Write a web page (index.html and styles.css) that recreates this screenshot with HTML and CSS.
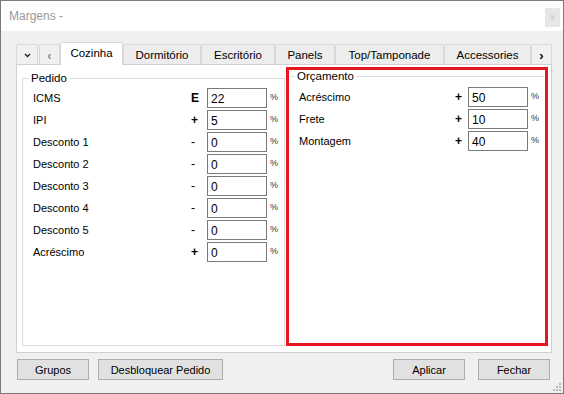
FILE: index.html
```html
<!DOCTYPE html>
<html lang="pt">
<head>
    <meta charset="UTF-8">
    <meta name="viewport" content="width=device-width, initial-scale=1.0">
    <link rel="stylesheet" href="styles.css">
</head>
<body>
    <div class="window">
        <!-- Title bar -->
        <div class="titlebar">
            <span class="title">Margens -</span>
            <span class="close">x</span>
        </div>

        <div class="content">
            <!-- Tabs -->
            <div class="tabs">
                <div class="tab nav nav-down">
                    <svg width="7" height="5" viewBox="0 0 7 5"><path d="M1 1 L3.5 3.5 L6 1" fill="none" stroke="#222" stroke-width="1.4"/></svg>
                </div>
                <div class="tab nav nav-left">&lsaquo;</div>
                <div class="tab active w-cozinha">Cozinha</div>
                <div class="tab w-dorm">Dormitório</div>
                <div class="tab w-escr">Escritório</div>
                <div class="tab w-panels">Panels</div>
                <div class="tab w-top">Top/Tamponade</div>
                <div class="tab w-acc">Accessories</div>
                <div class="tab nav nav-right">&rsaquo;</div>
            </div>

            <!-- Tab page -->
            <div class="panel">
                <fieldset class="group pedido">
                    <legend>Pedido</legend>
                    <div class="row"><span class="label">ICMS</span><span class="sign">E</span><input class="value" value="22"><span class="pct">%</span></div>
                    <div class="row"><span class="label">IPI</span><span class="sign">+</span><input class="value" value="5"><span class="pct">%</span></div>
                    <div class="row"><span class="label">Desconto 1</span><span class="sign minus">-</span><input class="value" value="0"><span class="pct">%</span></div>
                    <div class="row"><span class="label">Desconto 2</span><span class="sign minus">-</span><input class="value" value="0"><span class="pct">%</span></div>
                    <div class="row"><span class="label">Desconto 3</span><span class="sign minus">-</span><input class="value" value="0"><span class="pct">%</span></div>
                    <div class="row"><span class="label">Desconto 4</span><span class="sign minus">-</span><input class="value" value="0"><span class="pct">%</span></div>
                    <div class="row"><span class="label">Desconto 5</span><span class="sign minus">-</span><input class="value" value="0"><span class="pct">%</span></div>
                    <div class="row"><span class="label">Acréscimo</span><span class="sign">+</span><input class="value" value="0"><span class="pct">%</span></div>
                </fieldset>

                <div class="highlight">
                    <fieldset class="group orcamento">
                        <legend>Orçamento</legend>
                        <div class="row"><span class="label">Acréscimo</span><span class="sign">+</span><input class="value" value="50"><span class="pct">%</span></div>
                        <div class="row"><span class="label">Frete</span><span class="sign">+</span><input class="value" value="10"><span class="pct">%</span></div>
                        <div class="row"><span class="label">Montagem</span><span class="sign">+</span><input class="value" value="40"><span class="pct">%</span></div>
                    </fieldset>
                </div>
            </div>

            <!-- Bottom buttons -->
            <div class="buttons">
                <button class="btn btn-grupos">Grupos</button>
                <button class="btn btn-wide">Desbloquear Pedido</button>
                <button class="btn btn-aplicar">Aplicar</button>
                <button class="btn btn-fechar">Fechar</button>
            </div>
        </div>

        <!-- Resize grip -->
        <svg class="grip" width="10" height="10" viewBox="0 0 10 10">
            <rect x="7" y="1" width="2" height="2"/>
            <rect x="4" y="4" width="2" height="2"/>
            <rect x="7" y="4" width="2" height="2"/>
            <rect x="1" y="7" width="2" height="2"/>
            <rect x="4" y="7" width="2" height="2"/>
            <rect x="7" y="7" width="2" height="2"/>
        </svg>
    </div>
</body>
</html>
```

FILE: styles.css
```css
body {
    margin: 0;
    font-family: 'Liberation Sans', Arial, sans-serif;
    font-size: 11px;
    color: #000;
    background: #fff;
}
.window {
    position: relative;
    width: 564px;
    height: 394px;
    border: 1px solid #7a7a7a;
    box-sizing: border-box;
    display: flex;
    flex-direction: column;
}
.titlebar {
    height: 30px;
    flex: none;
    background: #fff;
    display: flex;
    justify-content: space-between;
    padding: 0 3px 0 8px;
}
.title {
    font-size: 12px;
    color: #999;
    line-height: 30px;
}
.close {
    margin-top: 7px;
    width: 15px;
    height: 19px;
    background: #e6e6e6;
    color: #c4c4c4;
    font-size: 9px;
    line-height: 18px;
    text-align: center;
}
.content {
    flex: 1;
    background: #f0f0f0;
    padding: 11px 11px 0 15px;
    display: flex;
    flex-direction: column;
}

/* tabs */
.tabs {
    display: flex;
    align-items: flex-end;
    height: 22px;
}
.tab {
    height: 20px;
    box-sizing: border-box;
    border: 1px solid #d9d9d9;
    border-bottom: none;
    border-radius: 2px 2px 0 0;
    background: #ededed;
    display: flex;
    align-items: center;
    justify-content: center;
    font-size: 11.5px;
    padding-top: 1px;
}
.tab.active {
    position: relative;
    z-index: 1;
    height: 23px;
    margin-bottom: -1px;
    background: #fff;
    padding-top: 0;
    padding-bottom: 2px;
}
.nav {
    width: 21px;
    font-size: 13px;
    font-weight: bold;
    background: #f0f0f0;
}
.nav-down { width: 22px; }
.nav-left { margin-left: 1px; color: #888; }
.w-cozinha { width: 63px; }
.w-dorm { width: 78px; }
.w-escr { width: 74px; }
.w-panels { width: 60px; }
.w-top { width: 109px; }
.w-acc { width: 87px; }

/* tab page */
.panel {
    flex: none;
    height: 289px;
    box-sizing: border-box;
    border: 1px solid #d0d0d0;
    background: #fff;
    display: flex;
}
.group {
    margin: 0;
    padding: 0;
    border: 1px solid #dcdcdc;
    min-width: 0;
}
.group legend {
    padding: 0 2px;
    margin-left: -4px;
    line-height: 13px;
    font-size: 11.5px;
}
.pedido {
    width: 263px;
    box-sizing: border-box;
    margin: 7px 0 6px 5px;
    padding: 2px 0 0 10px;
}
.highlight {
    flex: 1;
    margin: 2px 3px 6px 1px;
    border: 3px solid #e4161f;
    display: flex;
}
.orcamento {
    flex: 1;
    margin: 0 1px 1px 1px;
    padding: 3px 0 0 8px;
    border-color: #dcdcdc transparent transparent transparent;
}

.row {
    display: flex;
    align-items: center;
    height: 22px;
}
.label {
    width: 158px;
}
.orcamento .label {
    width: 156px;
}
.sign {
    width: 16px;
    font-weight: bold;
    font-size: 12px;
}
.sign.minus {
    font-weight: normal;
}
.orcamento .sign {
    width: 13px;
}
.value {
    width: 60px;
    height: 20px;
    box-sizing: border-box;
    border: 1px solid #7a7a7a;
    padding: 1px 0 0 3px;
    margin: 0;
    font-family: 'Liberation Sans', Arial, sans-serif;
    font-size: 12px;
    color: #000;
    outline: none;
}
.pct {
    margin-left: 3px;
    margin-top: -3px;
    font-size: 9px;
    color: #333;
}

/* buttons */
.buttons {
    display: flex;
    margin-top: 6px;
}
.btn {
    height: 21px;
    width: 72px;
    box-sizing: border-box;
    padding: 0;
    border: 1px solid #adadad;
    background: #e1e1e1;
    font-family: 'Liberation Sans', Arial, sans-serif;
    font-size: 11px;
    color: #000;
}
.btn-grupos { margin-left: 1px; }
.btn-wide { width: 125px; margin-left: 9px; }
.btn-aplicar { margin-left: auto; }
.btn-fechar { margin-left: 13px; margin-right: 2px; }

.grip {
    position: absolute;
    right: 1px;
    bottom: 1px;
    fill: #b8b8b8;
}
```
